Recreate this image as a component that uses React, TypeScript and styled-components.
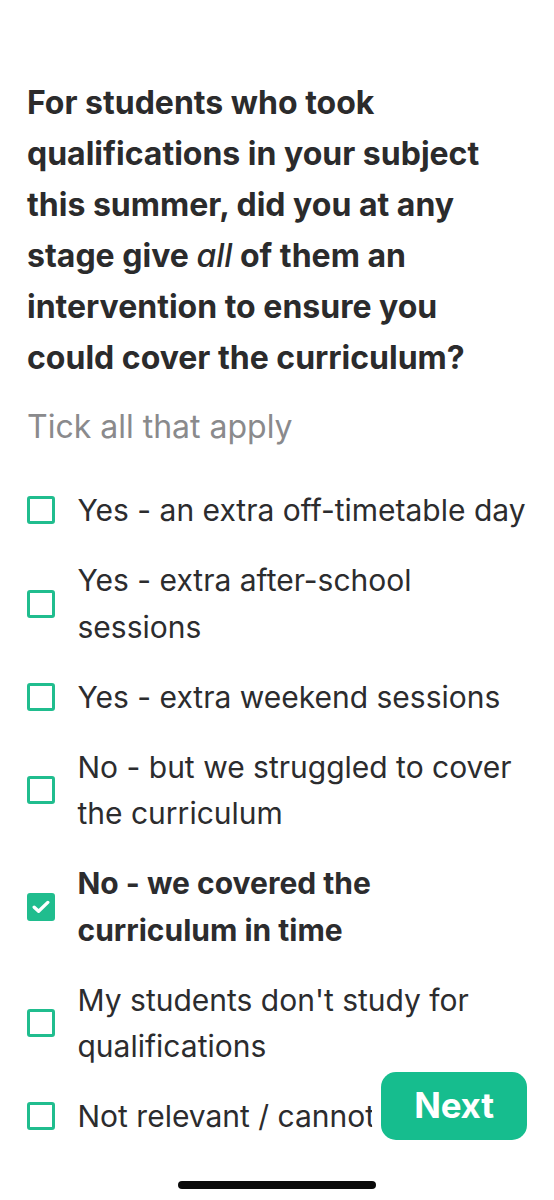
import React from "react";
import styled, { createGlobalStyle } from "styled-components";

const GlobalStyle = createGlobalStyle`
  html, body {
    margin: 0;
    padding: 0;
    background: #ffffff;
  }
  body {
    font-family: Inter, "Noto Sans", "Liberation Sans", sans-serif;
    -webkit-font-smoothing: antialiased;
  }
`;

const Screen = styled.div`
  position: relative;
  width: 554px;
  height: 1200px;
  overflow: hidden;
  background: #ffffff;
`;

const Content = styled.div`
  display: flex;
  flex-direction: column;
  padding: 77px 24px 0 27px;
`;

const Question = styled.h1`
  margin: 0;
  width: 468px;
  font-size: 32px;
  font-weight: 700;
  line-height: 51px;
  color: #2b2b2c;
  letter-spacing: 0;

  em {
    font-style: italic;
    font-weight: 500;
  }
`;

const Hint = styled.p`
  margin: 21px 0 0;
  font-size: 32px;
  font-weight: 400;
  line-height: 46px;
  color: #8a8a8c;
  letter-spacing: 0;
`;

const OptionList = styled.ul`
  list-style: none;
  margin: 37px 0 0;
  padding: 0;
  display: flex;
  flex-direction: column;
  gap: 23.5px;
`;

const OptionRow = styled.li`
  display: flex;
  align-items: center;
  gap: 23px;
`;

const Box = styled.span<{ $checked?: boolean }>`
  flex: 0 0 auto;
  box-sizing: border-box;
  width: 28px;
  height: 28px;
  margin-left: -0.5px;
  border-radius: 3px;
  border: 3px solid #20bd8e;
  background: ${(p) => (p.$checked ? "#20bd8e" : "#ffffff")};
  display: flex;
  align-items: center;
  justify-content: center;
`;

const OptionText = styled.span<{ $checked?: boolean }>`
  font-size: 30px;
  line-height: 46.5px;
  font-weight: ${(p) => (p.$checked ? 700 : 400)};
  color: #2c2c2e;
  letter-spacing: 0;
`;

const NextButton = styled.button`
  position: absolute;
  left: 381px;
  top: 1072px;
  width: 146px;
  height: 68px;
  border: none;
  border-radius: 15px;
  background: #16bd8e;
  box-shadow: -9px 0 0 0 #ffffff;
  color: #ffffff;
  font-family: Inter, "Noto Sans", "Liberation Sans", sans-serif;
  font-size: 35px;
  font-weight: 700;
  letter-spacing: -0.2px;
  padding: 0 0 2px;
  cursor: pointer;
`;

const HomeIndicator = styled.div`
  position: absolute;
  left: 178px;
  top: 1181px;
  width: 198px;
  height: 8px;
  border-radius: 4px;
  background: #0a0a0a;
`;

const Check = () => (
  <svg width="18" height="14" viewBox="0 0 18 14" fill="none">
    <path
      d="M2.2 7.2 L6.6 11.3 L15.8 2.4"
      stroke="#ffffff"
      strokeWidth="3.3"
      strokeLinecap="round"
      strokeLinejoin="round"
    />
  </svg>
);

const options: { label: string; checked?: boolean }[] = [
  { label: "Yes - an extra off-timetable day" },
  { label: "Yes - extra after-school sessions" },
  { label: "Yes - extra weekend sessions" },
  { label: "No - but we struggled to cover the curriculum" },
  { label: "No - we covered the curriculum in time", checked: true },
  { label: "My students don't study for qualifications" },
  { label: "Not relevant / cannot say" },
];

export default function App() {
  return (
    <Screen>
      <GlobalStyle />
      <Content>
        <Question>
          For students who took qualifications in your subject this summer, did
          you at any stage give <em>all</em> of them an intervention to ensure
          you could cover the curriculum?
        </Question>
        <Hint>Tick all that apply</Hint>
        <OptionList>
          {options.map((o) => (
            <OptionRow key={o.label}>
              <Box $checked={o.checked}>{o.checked && <Check />}</Box>
              <OptionText $checked={o.checked}>{o.label}</OptionText>
            </OptionRow>
          ))}
        </OptionList>
      </Content>
      <NextButton>Next</NextButton>
      <HomeIndicator />
    </Screen>
  );
}
